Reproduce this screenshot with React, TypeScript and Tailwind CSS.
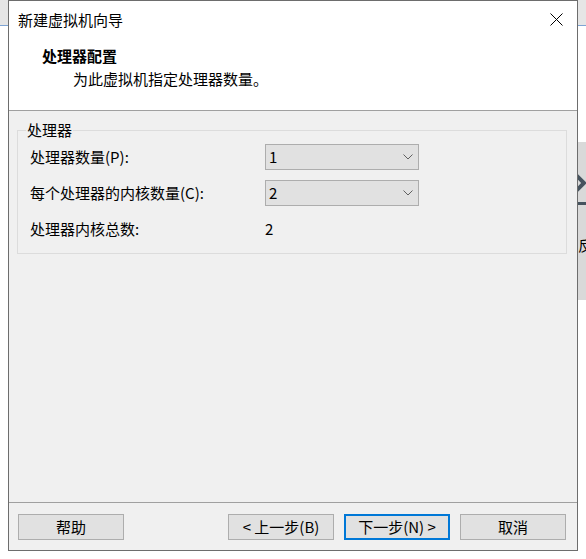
import React from 'react';

const font = "font-['Noto_Sans_CJK_SC',sans-serif]";

function Chevron() {
  return (
    <svg width="10" height="6" viewBox="0 0 10 6" className="shrink-0">
      <path d="M0.5 0.5 L5 5 L9.5 0.5" fill="none" stroke="#606060" strokeWidth="1" />
    </svg>
  );
}

function Select({ value }: { value: string }) {
  return (
    <div className="flex h-[26px] w-[154px] items-center justify-between border border-[#adadad] bg-[#e1e1e1] pl-[3px] pr-[5px]">
      <span className="text-[15px] leading-[20px]">{value}</span>
      <Chevron />
    </div>
  );
}

function Button({ label, primary }: { label: string; primary?: boolean }) {
  return (
    <button
      className={
        primary
          ? 'flex h-[26px] w-[106px] items-center justify-center border-2 border-[#0078d7] bg-[#e1e1e1] text-[15px] leading-[20px]'
          : 'flex h-[26px] w-[106px] items-center justify-center border border-[#adadad] bg-[#e1e1e1] text-[15px] leading-[20px]'
      }
    >
      {label}
    </button>
  );
}

export default function App() {
  return (
    <div className={`flex h-[559px] w-[586px] bg-white text-black ${font}`}>
      {/* desktop behind, left edge */}
      <div className="flex w-[8px] flex-col">
        <div className="h-[26px] border-b border-[#7ea4d4] bg-[#e6e6e6]" />
      </div>

      {/* wizard window */}
      <div className="flex h-[551px] w-[570px] flex-col border border-[#6d6d6d] bg-white">
        <div className="flex h-[37px] items-center justify-between pl-[9px] pr-[14px]">
          <span className="text-[15px] leading-[20px]">新建虚拟机向导</span>
          <svg width="13" height="13" viewBox="0 0 13 13">
            <path d="M0.5 0.5 L12.5 12.5 M12.5 0.5 L0.5 12.5" stroke="#000" strokeWidth="1" />
          </svg>
        </div>

        <div className="h-[73px] border-b border-[#a0a0a0] pt-[8px]">
          <div className="pl-[33px] text-[15px] font-bold leading-[20px]">处理器配置</div>
          <div className="mt-[3px] pl-[64px] text-[15px] leading-[20px]">为此虚拟机指定处理器数量。</div>
        </div>

        <div className="flex flex-1 flex-col bg-[#f0f0f0]">
          <fieldset className="ml-[8px] mr-[10px] mt-[9px] border border-[#dcdcdc] pb-[11px] pl-[8px]">
            <legend className="px-[1px] text-[15px] leading-[20px]">处理器</legend>
            <div className="ml-[4px] grid grid-cols-[235px_154px] gap-y-[10px] pt-[4px] text-[15px] leading-[20px]">
              <div className="flex h-[26px] items-center">处理器数量(P):</div>
              <Select value="1" />
              <div className="flex h-[26px] items-center">每个处理器的内核数量(C):</div>
              <Select value="2" />
              <div className="flex h-[26px] items-center">处理器内核总数:</div>
              <div className="flex h-[26px] items-center">2</div>
            </div>
          </fieldset>

          <div className="flex-1" />

          <div className="flex h-[48px] items-start border-t border-[#a0a0a0] pl-[9px] pr-[11px] pt-[11px]">
            <Button label="帮助" />
            <div className="ml-auto flex gap-[10px]">
              <Button label="< 上一步(B)" />
              <Button label="下一步(N) >" primary />
              <Button label="取消" />
            </div>
          </div>
        </div>
      </div>

      {/* desktop behind, right edge */}
      <div className="flex flex-1 flex-col overflow-hidden">
        <div className="h-[26px] border-b border-[#7ea4d4] bg-[#e6e6e6]" />
        <div className="mt-[116px] flex h-[158px] w-[8px] flex-col overflow-hidden bg-[#d9d9d9]">
          <svg width="16" height="18" viewBox="0 0 16 18" className="mt-[32px] -ml-[4px] shrink-0">
            <path d="M2 1 L10 9 L2 17" fill="none" stroke="#46535e" strokeWidth="4" />
          </svg>
          <div className="mt-[10px] h-[3px] w-[8px] shrink-0 bg-[#46535e]" />
          <div className="mt-[30px] shrink-0 text-[15px] leading-[20px]">反</div>
        </div>
      </div>
    </div>
  );
}
